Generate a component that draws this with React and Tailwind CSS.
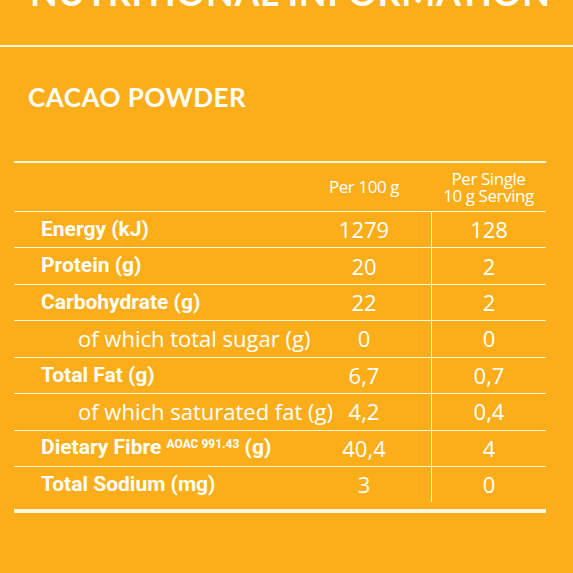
const rows = [
  { label: "Energy (kJ)", per100: "1279", serving: "128" },
  { label: "Protein (g)", per100: "20", serving: "2" },
  { label: "Carbohydrate (g)", per100: "22", serving: "2" },
  { label: "of which total sugar (g)", per100: "0", serving: "0", sub: true },
  { label: "Total Fat (g)", per100: "6,7", serving: "0,7" },
  { label: "of which saturated fat (g)", per100: "4,2", serving: "0,4", sub: true },
  { label: "Dietary Fibre", sup: "AOAC 991.43", unit: "(g)", per100: "40,4", serving: "4" },
  { label: "Total Sodium (mg)", per100: "3", serving: "0" },
];

const sans = "font-['Open_Sans',sans-serif]";
const bold = "font-['Roboto',sans-serif] font-bold";

const Row = ({ row }) => (
  <div className="flex h-[36.43px] border-t border-[#fff6e0] items-center">
    <div className="w-[283px] shrink-0 relative h-full flex items-center">
      {row.sub ? (
        <span className={`${sans} absolute left-[64px] whitespace-nowrap text-[22px] text-white`}>{row.label}</span>
      ) : (
        <span className={`${bold} pl-[27px] whitespace-nowrap text-[21px] text-white`}>
          {row.label}
          {row.sup && (
            <>
              {" "}
              <sup className="text-[12px] relative -top-[6px]">{row.sup}</sup> {row.unit}
            </>
          )}
        </span>
      )}
    </div>
    <div className={`${sans} w-[134px] shrink-0 text-center text-[22px] text-white`}>{row.per100}</div>
    <div className={`${sans} h-full flex-1 flex items-center justify-center border-l border-[#fff6e0] text-[22px] text-white`}>
      {row.serving}
    </div>
  </div>
);

export default function App() {
  return (
    <div className="w-[573px] h-[573px] bg-[#fbae19] overflow-hidden">
      <div className="h-[47px] border-b-2 border-[#fff6e0] overflow-hidden">
        <div className="font-['Lato',sans-serif] font-bold text-[36px] leading-none text-white pl-[30px] -mt-[26px] tracking-[0.6px] whitespace-nowrap">
          NUTRITIONAL INFORMATION
        </div>
      </div>
      <div className="pt-[37px] pl-[28px] font-['Lato',sans-serif] font-bold text-[26px] tracking-[0.5px] leading-none text-white">
        CACAO POWDER
      </div>
      <div className="ml-[14px] w-[532px] mt-[51px] border-t-2 border-[#fff6e0]">
        <div className="flex h-[48px] items-center">
          <div className="w-[283px] shrink-0" />
          <div className={`${sans} w-[134px] text-center text-[17px] tracking-tight text-white`}>Per 100 g</div>
          <div className={`${sans} flex-1 text-center text-[17px] leading-[17px] tracking-tight text-white`}>
            Per Single
            <br />
            10 g Serving
          </div>
        </div>
        {rows.map((row) => (
          <Row key={row.label} row={row} />
        ))}
        <div className="h-[7px]" />
        <div className="h-[4px] bg-[#fff6e0]" />
      </div>
    </div>
  );
}
